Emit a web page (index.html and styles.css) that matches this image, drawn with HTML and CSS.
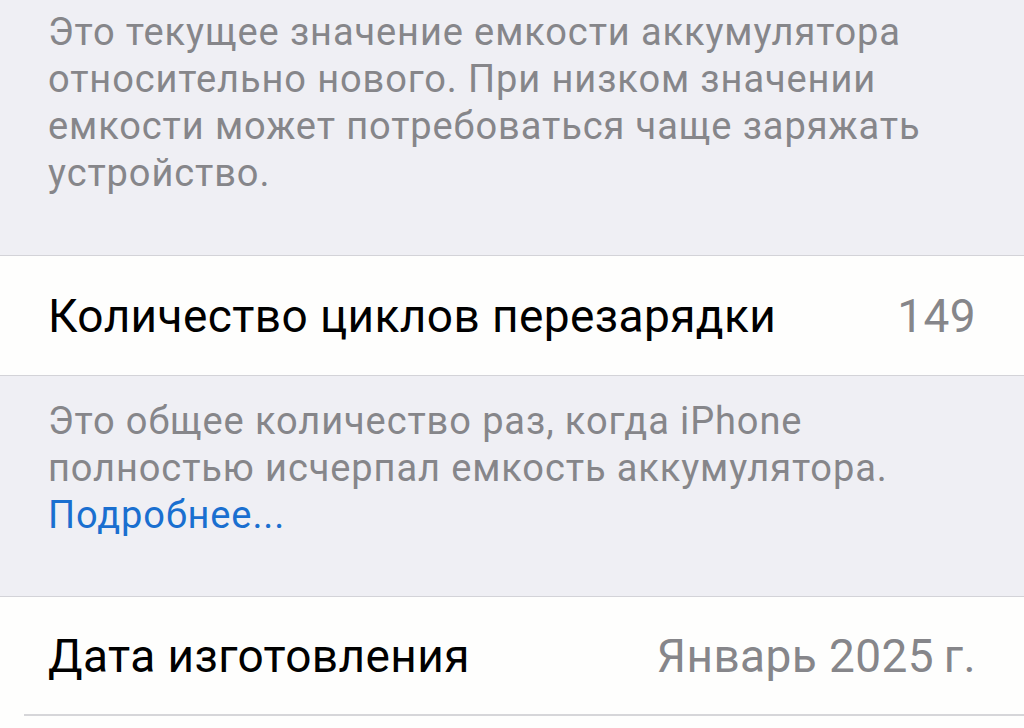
FILE: index.html
```html
<!DOCTYPE html>
<html lang="ru">
<head>
    <meta charset="UTF-8" />
    <meta name="viewport" content="width=device-width, initial-scale=1.0" />
    <title>Аккумулятор</title>
    <link rel="stylesheet" href="styles.css">
</head>
<body>
    <div class="footer footer-top">
        <p>Это текущее значение емкости аккумулятора относительно нового. При низком значении емкости может потребоваться чаще заряжать устройство.</p>
    </div>

    <div class="group">
        <div class="row">
            <span class="label">Количество циклов перезарядки</span>
            <span class="value">149</span>
        </div>
    </div>

    <div class="footer">
        <p>Это общее количество раз, когда iPhone полностью исчерпал емкость аккумулятора.<br><a href="#">Подробнее...</a></p>
    </div>

    <div class="group">
        <div class="row row-inset">
            <span class="label">Дата изготовления</span>
            <span class="value">Январь 2025&thinsp;г.</span>
        </div>
    </div>
</body>
</html>
```

FILE: styles.css
```css
/* Global Reset */
* { box-sizing: border-box; margin: 0; padding: 0; }
body {
    font-family: Roboto, "Liberation Sans", sans-serif;
    background-color: #efeff4;
    color: #000;
    height: 728px;
    overflow: hidden;
}

.footer {
    padding: 22px 100px 0 48px;
    color: #86868a;
    font-size: 38px;
    letter-spacing: 0.9px;
    line-height: 47px;
    height: 220px;
}
.footer-top {
    height: 255px;
    padding-top: 9px;
}
.footer a {
    color: #1a6fd0;
    text-decoration: none;
}

.group {
    background: #fefefd;
    border-top: 1px solid #d3d3d8;
    border-bottom: 1px solid #d3d3d8;
}
.row {
    display: flex;
    justify-content: space-between;
    align-items: center;
    height: 119px;
    padding: 0 48px;
    font-size: 46px;
    letter-spacing: 0.4px;
}
.value {
    color: #86868a;
}
.group:last-child {
    border-bottom: none;
    padding-bottom: 12px;
}
.row-inset {
    border-bottom: 2px solid #d6d6d9;
    margin-left: 24px;
    padding-left: 24px;
}
```
